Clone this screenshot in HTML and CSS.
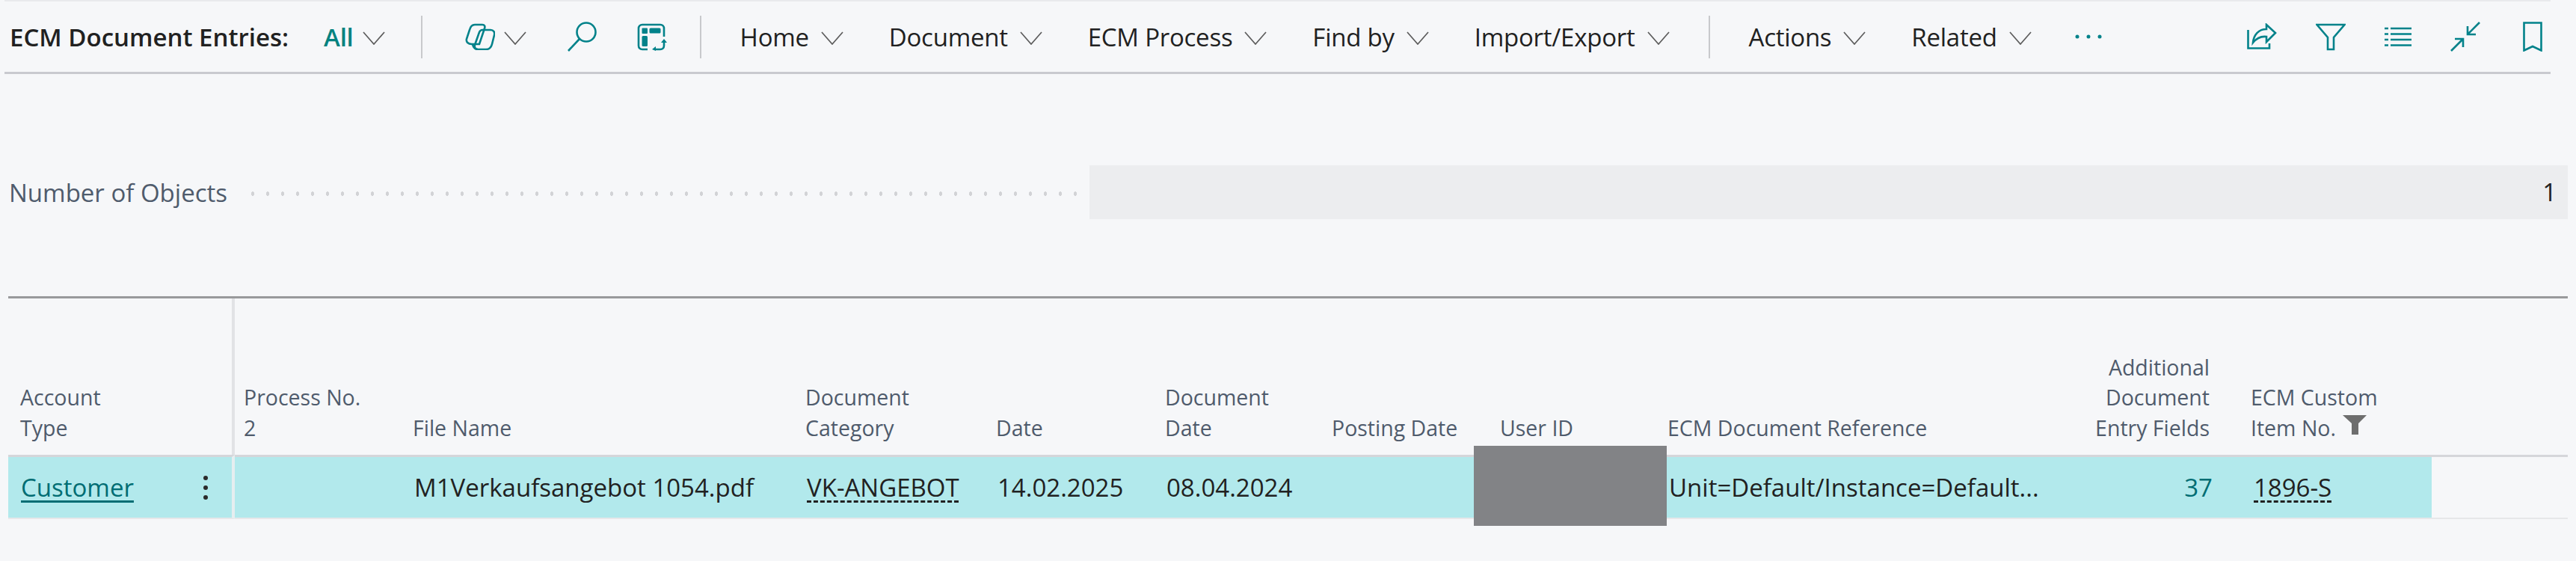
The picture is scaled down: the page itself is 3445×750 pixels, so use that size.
FILE: index.html
```html
<!DOCTYPE html>
<html lang="en">
<head>
    <meta charset="UTF-8">
    <meta name="viewport" content="width=device-width, initial-scale=1.0">
    <title>ECM Document Entries</title>
    <link rel="stylesheet" href="styles.css">
</head>
<body>
    <nav class="toolbar">
        <span class="page-title">ECM Document Entries:</span>
        <a class="menu view-menu" href="#">All <svg class="chev" viewBox="0 0 30 18"><path d="M1 1l14 16L29 1"/></svg></a>
        <span class="sep"></span>

        <span class="tool tool-copilot">
            <svg class="ico" width="40" height="36" viewBox="0 0 40 36">
                <path d="M13 2h10c3 0 4 2 3 5l-7 21H9c-5 0-8-3-7-7l4-12c1-4 3-7 7-7z"/>
                <path d="M23 9h11c4 0 6 3 5 7l-3 12c-1 4-3 7-8 7H17c-3 0-6-2-7-7"/>
                <path d="M23 9c-2 0-3 1-4 3l-6 17c-1 3 1 6 4 6"/>
            </svg>
            <svg class="chev" viewBox="0 0 30 18"><path d="M1 1l14 16L29 1"/></svg>
        </span>
        <svg class="ico tool-search" width="40" height="40" viewBox="0 0 40 40">
            <circle cx="26" cy="14" r="12.500"/>
            <path d="M17 23L2 39"/>
        </svg>
        <svg class="ico tool-layout" width="40" height="37" viewBox="0 0 40 37">
            <path d="M14 35H7c-3 0-5-2-5-5V7c0-3 2-5 5-5h24c3 0 5 2 5 5v11"/>
            <rect class="solid" x="6.500" y="6.500" width="7.500" height="7.500" rx="1"/>
            <rect class="solid" x="16.500" y="6.500" width="15" height="7" rx="1.500"/>
            <rect class="solid" x="6.500" y="17" width="7.500" height="14" rx="1.500"/>
            <path d="M36 25v5c0 3-2 5-5 5h-7"/>
            <path class="solid" d="M32 26l4-5 4 5zM25 31l-5 4 5 2z"/>
        </svg>
        <span class="sep"></span>

        <a class="menu" href="#">Home <svg class="chev" viewBox="0 0 30 18"><path d="M1 1l14 16L29 1"/></svg></a>
        <a class="menu" href="#">Document <svg class="chev" viewBox="0 0 30 18"><path d="M1 1l14 16L29 1"/></svg></a>
        <a class="menu" href="#">ECM Process <svg class="chev" viewBox="0 0 30 18"><path d="M1 1l14 16L29 1"/></svg></a>
        <a class="menu" href="#">Find by <svg class="chev" viewBox="0 0 30 18"><path d="M1 1l14 16L29 1"/></svg></a>
        <a class="menu last-in-group" href="#">Import/Export <svg class="chev" viewBox="0 0 30 18"><path d="M1 1l14 16L29 1"/></svg></a>
        <span class="sep"></span>

        <a class="menu" href="#">Actions <svg class="chev" viewBox="0 0 30 18"><path d="M1 1l14 16L29 1"/></svg></a>
        <a class="menu" href="#">Related <svg class="chev" viewBox="0 0 30 18"><path d="M1 1l14 16L29 1"/></svg></a>
        <svg class="more" width="36" height="6" viewBox="0 0 36 6"><circle cx="3" cy="3" r="2.500"/><circle cx="18" cy="3" r="2.500"/><circle cx="33" cy="3" r="2.500"/></svg>

        <div class="page-actions">
            <svg class="ico" width="40" height="36" viewBox="0 0 40 36">
                <path d="M1.500 9v24.500H30V27"/>
                <path d="M26 2l12 11-12 12v-7c-8-1-14 3-18 8 1-11 8-18 18-18z"/>
            </svg>
            <svg class="ico" width="40" height="37" viewBox="0 0 40 37">
                <path d="M1.500 2h37L24 19v16h-8V19z"/>
            </svg>
            <svg class="ico" width="36" height="26" viewBox="0 0 36 26">
                <path d="M0 2h5M8 2h28M0 9.500h5M8 9.500h28M0 17h5M8 17h28M0 24.500h5M8 24.500h28"/>
            </svg>
            <svg class="ico" width="40" height="40" viewBox="0 0 40 40">
                <path d="M1 39l16-16M6 23h11v11M39 1L23 17M23 6v11h11"/>
            </svg>
            <svg class="ico tool-bookmark" width="26" height="40" viewBox="0 0 26 40">
                <path d="M1.500 1.500h23v37L13 33 1.500 38.500z"/>
            </svg>
        </div>
    </nav>

    <section class="field-row">
        <span class="field-label">Number of Objects</span>
        <span class="field-dots"></span>
        <div class="field-value">1</div>
    </section>

    <div class="list-rule"></div>

    <table class="entries">
        <colgroup>
            <col class="c-account">
            <col class="c-process">
            <col class="c-file">
            <col class="c-category">
            <col class="c-date">
            <col class="c-docdate">
            <col class="c-posting">
            <col class="c-user">
            <col class="c-ref">
            <col class="c-fields">
            <col class="c-item">
            <col class="c-rest">
        </colgroup>
        <thead>
            <tr>
                <th class="frozen">Account<br>Type</th>
                <th>Process No.<br>2</th>
                <th>File Name</th>
                <th>Document<br>Category</th>
                <th>Date</th>
                <th>Document<br>Date</th>
                <th>Posting Date</th>
                <th>User ID</th>
                <th>ECM Document Reference</th>
                <th class="num">Additional<br>Document<br>Entry Fields</th>
                <th>ECM Custom<br>Item No.
                    <svg class="col-filter" width="32" height="26" viewBox="0 0 32 26"><path d="M0 0h32L21 11v15h-9V11z"/></svg>
                </th>
                <th class="rest"></th>
            </tr>
        </thead>
        <tbody>
            <tr>
                <td class="frozen">
                    <div class="account-cell">
                        <a class="link" href="#">Customer</a>
                        <svg class="row-menu" width="8" height="34" viewBox="0 0 8 34"><circle cx="4" cy="4" r="3"/><circle cx="4" cy="17" r="3"/><circle cx="4" cy="30" r="3"/></svg>
                    </div>
                </td>
                <td></td>
                <td>M1Verkaufsangebot 1054.pdf</td>
                <td><span class="lookup">VK-ANGEBOT</span></td>
                <td>14.02.2025</td>
                <td>08.04.2024</td>
                <td></td>
                <td></td>
                <td class="ref">Unit=Default/Instance=Default...</td>
                <td class="num teal">37</td>
                <td class="item"><span class="lookup">1896-S</span></td>
                <td class="rest"></td>
            </tr>
        </tbody>
    </table>

    <div class="redacted"></div>
</body>
</html>
```

FILE: styles.css
```css
body {
    font-family: "Open Sans", "Noto Sans", sans-serif;
    font-size: 33px;
    margin: 0;
    background-color: #f6f7f9;
    color: #212121;
    overflow: hidden;
}

a {
    color: inherit;
    text-decoration: none;
}

/* toolbar */
.toolbar {
    display: flex;
    align-items: center;
    height: 94px;
    margin: 0 34px 0 6px;
    padding: 0 11px 0 7px;
    border-top: 2px solid #e9eaed;
    border-bottom: 3px solid #c9cacf;
}

.page-title {
    font-weight: 600;
    margin-right: 47px;
}

.menu {
    display: flex;
    align-items: center;
    gap: 16px;
    margin-right: 61px;
    white-space: nowrap;
    letter-spacing: -0.25px;
}

.view-menu {
    color: #03827f;
    font-weight: 600;
    gap: 12px;
    margin-right: 48px;
}

.last-in-group {
    margin-right: 52px;
}

.chev {
    width: 30px;
    height: 18px;
    flex: none;
    margin-top: 4px;
}

.chev path {
    fill: none;
    stroke: #5c5c5c;
    stroke-width: 1.7;
}

.sep {
    width: 2px;
    height: 57px;
    background-color: #c8c9cc;
    flex: none;
    margin-right: 52px;
}

.ico {
    flex: none;
}

.ico path,
.ico circle {
    fill: none;
    stroke: #02828a;
    stroke-width: 2.600;
}

.ico .solid {
    fill: #02828a;
    stroke: none;
}

.tool-copilot {
    display: flex;
    align-items: center;
    gap: 12px;
    margin-left: 5px;
    margin-right: 54px;
}

.tool-search {
    margin-right: 54px;
}

.tool-layout {
    margin-right: 44px;
}

.more {
    fill: #02828a;
    flex: none;
    margin-left: -3px;
}

.page-actions {
    display: flex;
    align-items: center;
    gap: 52px;
    margin-left: auto;
}

.tool-bookmark {
    margin-left: 5px;
}

/* field */
.field-row {
    display: flex;
    align-items: center;
    height: 72px;
    margin: 122px 11px 0 12px;
}

.field-label {
    color: #4f5b6c;
    white-space: nowrap;
}

.field-dots {
    flex: 1;
    height: 6px;
    margin: 3px 16px 0 24px;
    background-image: radial-gradient(ellipse 2px 3px, #d2d3d6 90%, transparent 100%);
    background-size: 20px 6px;
    background-repeat: repeat-x;
}

.field-value {
    width: 1977px;
    height: 72px;
    line-height: 72px;
    padding-right: 15px;
    box-sizing: border-box;
    text-align: right;
    background-color: #ecedef;
}

.list-rule {
    height: 3px;
    margin: 103px 11px 0 11px;
    background-color: #999a9c;
}

/* list */
.entries {
    width: 3423px;
    margin-left: 11px;
    table-layout: fixed;
    border-collapse: separate;
    border-spacing: 0;
}

.c-account { width: 303px; }
.c-process { width: 226px; }
.c-file { width: 525px; }
.c-category { width: 255px; }
.c-date { width: 226px; }
.c-docdate { width: 223px; }
.c-posting { width: 225px; }
.c-user { width: 224px; }
.c-ref { width: 527px; }
.c-fields { width: 253px; }
.c-item { width: 254px; }
.c-rest { width: 182px; }

.entries th {
    height: 209px;
    padding: 0 4px 16px 12px;
    box-sizing: border-box;
    vertical-align: bottom;
    text-align: left;
    font-weight: 400;
    font-size: 28.500px;
    line-height: 40.500px;
    color: #4f5b6c;
    white-space: nowrap;
}

.entries th.frozen {
    padding-left: 16px;
    border-right: 4px solid #e2e3e6;
}

.entries th.num {
    text-align: right;
    padding-right: 43px;
}

.entries td {
    height: 86px;
    padding: 0 4px 0 14px;
    box-sizing: border-box;
    background-color: #b2e9ec;
    border-top: 3px solid #d5d6da;
    border-bottom: 2px solid #e6e7e9;
    white-space: nowrap;
    overflow: hidden;
}

.entries td.frozen {
    padding-left: 17px;
    padding-right: 31px;
    border-right: 4px solid #e6eef0;
}

.entries td.num {
    text-align: right;
    padding-right: 39px;
}

.entries td.item {
    padding-left: 16px;
}

.entries td.rest {
    background-color: transparent;
}

.account-cell {
    display: flex;
    align-items: center;
    justify-content: space-between;
}

.link {
    color: #006d73;
    text-decoration: underline;
    text-decoration-thickness: 3px;
    text-underline-offset: 5px;
}

.row-menu {
    fill: #2b2b2b;
}

.lookup {
    text-decoration: underline dashed 3px #212121;
    text-underline-offset: 5px;
}

.teal {
    color: #006d73;
}

.col-filter {
    fill: #6e6e6e;
    margin-left: 2px;
    vertical-align: 2px;
}

/* blanked out in the source picture */
.redacted {
    position: absolute;
    left: 1971px;
    top: 596px;
    width: 258px;
    height: 107px;
    background-color: #828386;
}
```
